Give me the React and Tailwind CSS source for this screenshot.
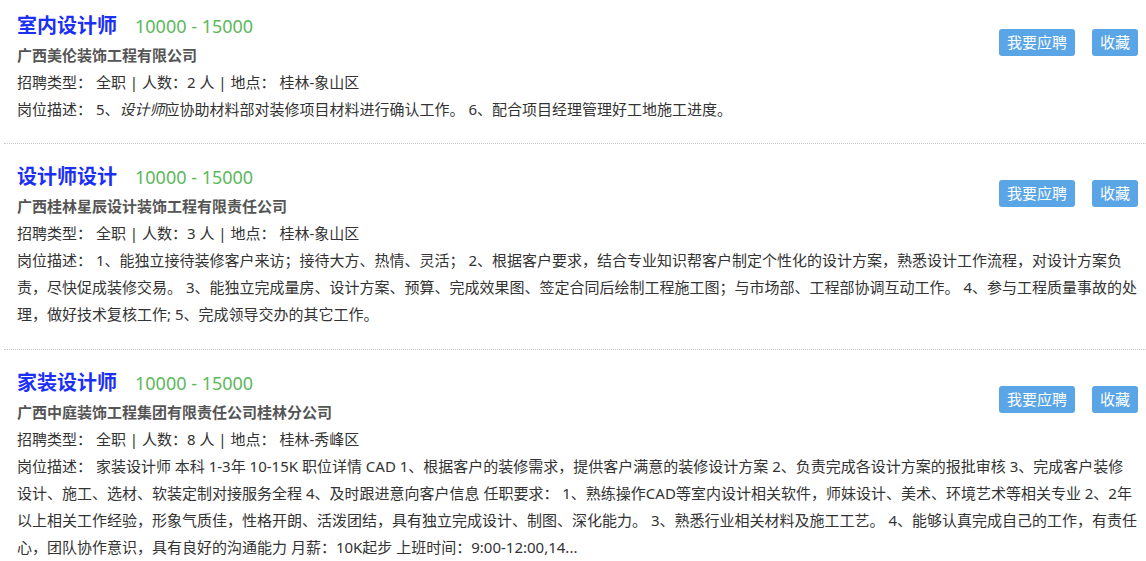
import React from "react";

const items = [
  {
    title: "室内设计师",
    company: "广西美伦装饰工程有限公司",
    count: "2",
    place: "桂林-象山区",
    desc: (
      <>
        岗位描述： 5、<em>设计师</em>应协助材料部对装修项目材料进行确认工作。 6、配合项目经理管理好工地施工进度。
      </>
    ),
  },
  {
    title: "设计师设计",
    company: "广西桂林星辰设计装饰工程有限责任公司",
    count: "3",
    place: "桂林-象山区",
    desc: (
      <>
        岗位描述： 1、能独立接待装修客户来访；接待大方、热情、灵活； 2、根据客户要求，结合专业知识帮客户制定个性化的设计方案，熟悉设计工作流程，对设计方案负责，尽快促成装修交易。 3、能独立完成量房、设计方案、预算、完成效果图、签定合同后绘制工程施工图；与市场部、工程部协调互动工作。 4、参与工程质量事故的处理，做好技术复核工作; 5、完成领导交办的其它工作。
      </>
    ),
  },
  {
    title: "家装设计师",
    company: "广西中庭装饰工程集团有限责任公司桂林分公司",
    count: "8",
    place: "桂林-秀峰区",
    desc: (
      <>
        岗位描述： 家装设计师 本科 1-3年 10-15K 职位详情 CAD 1、根据客户的装修需求，提供客户满意的装修设计方案 2、负责完成各设计方案的报批审核 3、完成客户装修设计、施工、选材、软装定制对接服务全程 4、及时跟进意向客户信息 任职要求： 1、熟练操作CAD等室内设计相关软件，师妹设计、美术、环境艺术等相关专业 2、2年以上相关工作经验，形象气质佳，性格开朗、活泼团结，具有独立完成设计、制图、深化能力。 3、熟悉行业相关材料及施工工艺。 4、能够认真完成自己的工作，有责任心，团队协作意识，具有良好的沟通能力 月薪：10K起步 上班时间：9:00-12:00,14...
      </>
    ),
  },
];

export default function App() {
  return (
    <div
      className="w-full min-h-screen bg-white pl-[4px] text-[15px] text-[#333]"
      style={{ fontFamily: '"Noto Sans", "Noto Sans CJK SC", sans-serif' }}
    >
      {items.map((it, i) => (
        <div
          key={i}
          className={
            i === 0
              ? "pt-[11px] pb-[20px] pl-[13px] pr-[8px]"
              : "border-t border-dotted border-[#c8c8c8] pt-[18px] pb-[21px] pl-[13px] pr-[8px]"
          }
        >
          <div className="flex justify-between">
            <div>
              <div className="flex items-center h-[30px]">
                <span className="text-[20px] font-bold text-[#1b2ff5]">{it.title}</span>
                <span className="ml-[18px] text-[18px] text-[#5cb85c]">10000 - 15000</span>
              </div>
              <div className="leading-[28px] font-bold text-[#555]">{it.company}</div>
              <div className="leading-[27px]">
                招聘类型： 全职 | 人数：{it.count} 人 | 地点： {it.place}
              </div>
            </div>
            <div className="flex gap-[17px] mt-[18px] h-[27px]">
              <button className="h-[27px] px-[8px] rounded-[3px] bg-[#5aa5e6] text-white text-[15px] leading-[27px]">
                我要应聘
              </button>
              <button className="h-[27px] px-[8px] rounded-[3px] bg-[#5aa5e6] text-white text-[15px] leading-[27px]">
                收藏
              </button>
            </div>
          </div>
          <div className="leading-[27px]">{it.desc}</div>
        </div>
      ))}
    </div>
  );
}
